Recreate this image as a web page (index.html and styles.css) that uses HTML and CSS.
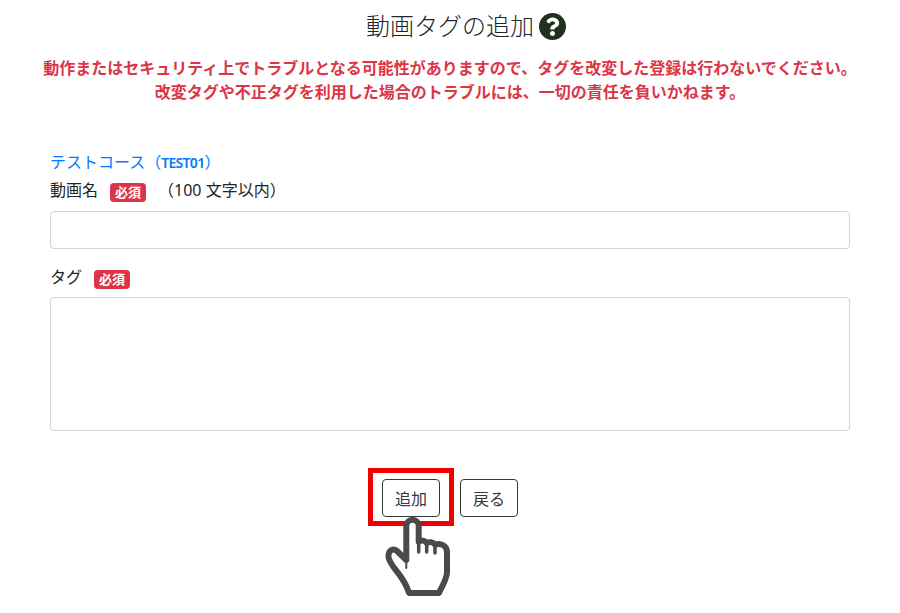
FILE: index.html
```html
<!DOCTYPE html>
<html lang="ja">

<head>
  <meta charset="UTF-8">
  <meta name="viewport" content="width=device-width, initial-scale=1.0">
  <link rel="stylesheet" href="styles.css">
</head>

<body>
  <div class="container">
    <h1 class="page-title">
      動画タグの追加
      <svg class="help-icon" viewBox="8 8 496 496">
        <path fill="#22301f" d="M504 256c0 136.997-111.043 248-248 248S8 392.997 8 256C8 119.083 119.043 8 256 8s248 111.083 248 248z" />
        <path fill="#fff" d="M262.655 90c-54.497 0-89.255 22.957-116.549 63.758-3.536 5.286-2.353 12.415 2.715 16.258l34.699 26.31c5.205 3.947 12.621 3.008 16.665-2.122 17.864-22.658 30.113-35.797 57.303-35.797 20.429 0 45.698 13.148 45.698 32.958 0 14.976-12.363 22.667-32.534 33.976C247.128 238.528 216 254.941 216 296v4c0 6.627 5.373 12 12 12h56c6.627 0 12-5.373 12-12v-1.333c0-28.462 83.186-29.647 83.186-106.667 0-58.002-60.165-102-116.531-102zM256 338c-25.365 0-46 20.635-46 46 0 25.364 20.635 46 46 46s46-20.636 46-46c0-25.365-20.635-46-46-46z" />
      </svg>
    </h1>

    <p class="warning">
      動作またはセキュリティ上でトラブルとなる可能性がありますので、タグを改変した登録は行わないでください。<br>
      改変タグや不正タグを利用した場合のトラブルには、一切の責任を負いかねます。
    </p>

    <form class="tag-form">
      <div class="course-name">テストコース（<span class="course-code">TEST01</span>）</div>

      <div class="field field-name">
        <label class="field-label">
          <span>動画名</span>
          <span class="badge">必須</span>
          <span class="hint">（100 文字以内）</span>
        </label>
        <input type="text" class="form-input">
      </div>

      <div class="field">
        <label class="field-label">
          <span>タグ</span>
          <span class="badge">必須</span>
        </label>
        <textarea class="form-input form-textarea"></textarea>
      </div>

      <div class="button-row">
        <div class="button-target">
          <button type="button" class="btn">追加</button>
          <div class="highlight"></div>
          <svg class="hand" viewBox="0 0 68 84">
            <path d="M21.3 11 A6.2 6.2 0 0 1 33.7 11 L33.7 26.7 C36.5 25 40 25.5 41.7 28 C44.5 26.5 48 27 50 29.5 C56 27.5 62 31 62 37 L62 58 C61 66 57 71 54 78 L24 78 C21 68 15 60 10 54 C7 50 4 46 3.5 42 C3 35 8 33 12 36 L21.3 45 Z" />
            <path class="hand-knuckle" d="M33.7 26.7 L33.7 37 M41.7 28 L41.7 37 M50 29.5 L50 38" />
            <path class="hand-thin" d="M21.3 45 L21.3 53" />
          </svg>
        </div>
        <button type="button" class="btn">戻る</button>
      </div>
    </form>
  </div>
</body>

</html>
```

FILE: styles.css
```css
* {
  box-sizing: border-box;
}

body {
  margin: 0;
  background-color: #fff;
  color: #212529;
  font-family: "Noto Sans", "Noto Sans CJK JP", sans-serif;
  font-size: 16px;
  line-height: 24px;
}

.container {
  height: 613px;
  padding: 0 50px;
  overflow: hidden;
}

.page-title {
  display: flex;
  align-items: center;
  justify-content: center;
  gap: 5px;
  height: 38px;
  margin: 7px 0 0;
  font-size: 24px;
  font-weight: 300;
  line-height: 38px;
}

.help-icon {
  width: 27px;
  height: 27px;
  margin-right: -32px;
}

/* Warning */
.warning {
  margin: 11px -20px 0;
  color: #dc3545;
  font-weight: 700;
  font-size: 16px;
  line-height: 24px;
  text-align: center;
}

/* Form */
.tag-form {
  margin-top: 46px;
}

.course-name {
  height: 24px;
  color: #007bff;
  line-height: 24px;
}

.course-code {
  font-weight: 600;
  font-size: 14px;
  letter-spacing: -0.7px;
}

.field-name {
  margin-top: 4px;
}

.field-label {
  display: flex;
  align-items: center;
  height: 24px;
}

.field {
  margin-bottom: 16px;
}

.field-label .badge {
  margin-top: 4px;
  margin-left: 12px;
}

.badge {
  display: inline-block;
  width: 36px;
  height: 19px;
  border-radius: 4px;
  background-color: #dc3545;
  color: #fff;
  font-size: 13px;
  font-weight: 700;
  line-height: 19px;
  text-align: center;
}

.field-label .hint {
  margin-left: 12px;
}

.form-input {
  display: block;
  width: 100%;
  height: 38px;
  margin-top: 9px;
  border: 1px solid #ced4da;
  border-radius: 4px;
  background-color: #fff;
}

.form-textarea {
  height: 134px;
  margin-top: 8px;
  resize: none;
}

/* Buttons */
.button-row {
  display: flex;
  justify-content: center;
  gap: 20px;
  margin-top: 48px;
}

.button-target {
  position: relative;
}

.btn {
  display: block;
  width: 58px;
  height: 38px;
  padding: 0;
  border: 1px solid #343a40;
  border-radius: 4px;
  background: #fff;
  color: #343a40;
  font-family: inherit;
  font-size: 16px;
}

.highlight {
  position: absolute;
  top: -11px;
  left: -14px;
  width: 86px;
  height: 58px;
  border: 5px solid #f00000;
}

.hand {
  position: absolute;
  top: 36px;
  left: 3px;
  width: 68px;
  height: 84px;
}

.hand path {
  fill: #fff;
  stroke: #4a4a4a;
  stroke-width: 6;
  stroke-linejoin: round;
  stroke-linecap: round;
}

.hand .hand-knuckle {
  stroke-width: 3.5;
}

.hand .hand-thin {
  stroke-width: 2;
}
```
